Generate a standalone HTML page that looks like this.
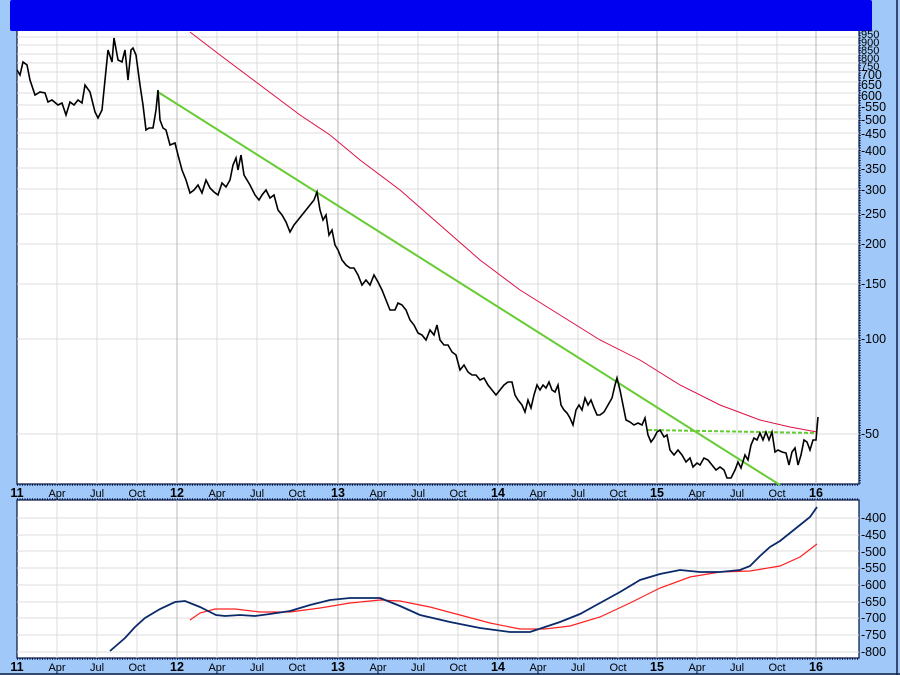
<!DOCTYPE html>
<html><head><style>
html,body{margin:0;padding:0;background:#a0c8f8;}
svg{display:block;font-family:"Liberation Sans",sans-serif;}
</style></head><body>
<svg width="900" height="675" viewBox="0 0 900 675">
<rect width="900" height="675" fill="#a0c8f8"/>
<line x1="897" y1="0" x2="897" y2="675" stroke="#102040" stroke-width="1.5"/>
<line x1="0" y1="674" x2="900" y2="674" stroke="#102040" stroke-width="1.5"/>
<rect x="17" y="0" width="842" height="484" fill="#fff" stroke="#001040" stroke-width="1.2"/>
<rect x="17" y="500" width="842" height="158" fill="#fff" stroke="#001040" stroke-width="1.2"/>
<g stroke="#dcdcdc" stroke-width="1">
<path d="M17 434H859M17 339H859M17 284H859M17 244H859M17 214H859M17 189H859M17 168H859M17 149H859M17 133H859M17 119H859M17 105H859M17 93H859M17 82H859M17 72H859M17 63H859M17 54H859M17 45H859M17 37H859"/>
<path d="M17 518H859M17 535H859M17 551H859M17 568H859M17 585H859M17 602H859M17 618H859M17 635H859M17 652H859"/>
</g>
<g stroke="#dcdcdc">
<path d="M57 0V484M97 0V484M137 0V484M217 0V484M257 0V484M297 0V484M378 0V484M418 0V484M458 0V484M538 0V484M578 0V484M618 0V484M697 0V484M737 0V484M777 0V484"/>
<path d="M57 500V658M97 500V658M137 500V658M217 500V658M257 500V658M297 500V658M378 500V658M418 500V658M458 500V658M538 500V658M578 500V658M618 500V658M697 500V658M737 500V658M777 500V658"/>
</g>
<g stroke="#b8b8b8">
<path d="M177 0V484M338 0V484M498 0V484M657 0V484M816 0V484"/>
<path d="M177 500V658M338 500V658M498 500V658M657 500V658M816 500V658"/>
</g>
<line x1="17" y1="485" x2="859" y2="485" stroke="#001040" stroke-dasharray="1,1.5" stroke-width="1.5"/>
<line x1="17" y1="499" x2="859" y2="499" stroke="#001040" stroke-dasharray="1,1.5" stroke-width="1.5"/>
<line x1="17" y1="659" x2="859" y2="659" stroke="#001040" stroke-dasharray="1,1.5" stroke-width="1.5"/>
<line x1="860" y1="30" x2="860" y2="484" stroke="#001040" stroke-dasharray="1,1.5" stroke-width="1.5"/>
<polyline fill="none" stroke="#dd1144" stroke-width="1" points="190,32 220,55 260,85 300,115 330,135 360,160 400,190 440,225 480,260 520,290 560,315 600,340 640,360 680,385 720,405 760,420 790,427 817,432"/>
<line x1="158" y1="92" x2="780" y2="485" stroke="#66cc33" stroke-width="2"/>
<line x1="648" y1="430" x2="817" y2="433" stroke="#66cc33" stroke-width="2" stroke-dasharray="4,2"/>
<polyline fill="none" stroke="#000" stroke-width="1.6" points="17,70 20,75 23,62 27,65 30,80 35,95 40,92 45,93 48,102 52,100 58,105 62,103 66,115 70,102 74,105 78,100 82,103 85,85 90,92 95,112 98,118 102,110 105,80 108,50 112,62 114,38 118,60 122,62 125,50 128,80 131,50 133,48 136,55 140,85 143,105 146,130 149,128 153,128 156,110 158,90 160,120 163,128 166,130 170,145 175,143 178,155 182,170 186,180 190,193 194,190 198,185 202,193 206,180 210,188 214,192 218,195 222,183 226,187 230,180 233,165 236,158 238,170 241,155 244,175 247,180 250,185 255,195 259,200 262,195 266,190 270,198 274,195 278,210 282,215 286,222 290,232 294,225 298,220 302,215 306,210 310,205 314,200 317,192 320,210 323,220 326,215 329,235 332,230 335,245 338,250 342,260 346,265 350,268 354,268 358,275 362,285 366,280 370,285 374,275 378,282 382,290 386,300 390,310 395,310 398,303 402,305 406,310 410,320 414,325 418,333 422,335 426,340 430,330 434,335 437,325 440,340 444,345 448,345 452,352 456,355 460,370 464,365 468,372 472,375 476,375 480,380 484,378 488,385 492,390 496,395 500,390 504,385 508,382 512,382 515,395 518,400 522,405 525,412 528,400 531,408 534,395 537,385 540,390 543,385 546,388 549,382 552,390 555,392 558,385 561,405 564,410 567,413 570,418 573,425 576,410 579,405 582,410 585,398 588,405 591,400 594,408 597,415 600,415 604,412 608,405 612,398 615,385 617,378 620,390 623,405 626,420 630,422 634,425 638,423 642,425 645,418 648,435 651,442 654,438 657,432 660,430 664,437 667,435 670,450 674,455 678,450 682,455 686,462 690,458 693,467 697,463 700,465 704,458 708,460 712,465 716,470 720,467 724,470 727,478 731,478 735,470 738,462 741,468 745,455 748,460 751,445 754,438 757,440 760,433 763,440 766,432 769,440 772,432 775,452 778,450 782,452 786,453 789,465 792,452 795,448 798,465 801,455 804,440 807,442 810,450 813,440 816,440 818,417"/>
<polyline fill="none" stroke="#ff2020" stroke-width="1.2" points="190,620 200,613 215,609 235,609 260,612 290,612 320,608 350,603 380,600 400,601 430,607 460,615 490,623 520,629 545,629 570,626 600,617 630,603 660,588 690,577 720,572 750,571 780,566 800,557 817,544"/>
<polyline fill="none" stroke="#0a2a6a" stroke-width="1.8" points="110,651 125,638 135,627 145,618 160,609 175,602 185,601 200,607 210,612 216,615 225,616 240,615 255,616 270,614 290,611 310,605 330,600 350,598 380,598 400,606 420,615 450,622 480,628 510,632 530,632 545,627 560,622 580,614 600,603 620,592 640,580 660,574 680,570 700,572 720,572 740,570 750,566 760,556 770,547 780,541 790,533 800,525 810,517 817,507"/>
<rect x="10" y="0" width="862" height="31" rx="2" fill="#0000f0"/>
<g font-size="12.5" fill="#000" lengthAdjust="spacingAndGlyphs">
<text x="861" y="38" font-size="11">950</text><text x="861" y="46" font-size="11">900</text><text x="861" y="54" font-size="11">850</text><text x="861" y="62" font-size="11">800</text><text x="861" y="70" font-size="11">750</text><text x="861" y="79">700</text><text x="861" y="89">650</text><text x="861" y="100">600</text><text x="861" y="111">-550</text><text x="861" y="124">-500</text><text x="861" y="138">-450</text><text x="861" y="155">-400</text><text x="861" y="173">-350</text><text x="861" y="194">-300</text><text x="861" y="218">-250</text><text x="861" y="248">-200</text><text x="861" y="288">-150</text><text x="861" y="343">-100</text><text x="861" y="438">-50</text>
<text x="861" y="522">-400</text><text x="861" y="539">-450</text><text x="861" y="556">-500</text><text x="861" y="572">-550</text><text x="861" y="589">-600</text><text x="861" y="606">-650</text><text x="861" y="622">-700</text><text x="861" y="639">-750</text><text x="861" y="656">-800</text>
</g>
<g font-size="11" fill="#000" text-anchor="middle">
<g transform="translate(0,497)">
<text x="17" font-weight="bold" font-size="12.5">11</text><text x="57">Apr</text><text x="97">Jul</text><text x="137">Oct</text><text x="177" font-weight="bold" font-size="12.5">12</text><text x="217">Apr</text><text x="257">Jul</text><text x="297">Oct</text><text x="338" font-weight="bold" font-size="12.5">13</text><text x="378">Apr</text><text x="418">Jul</text><text x="458">Oct</text><text x="498" font-weight="bold" font-size="12.5">14</text><text x="538">Apr</text><text x="578">Jul</text><text x="618">Oct</text><text x="657" font-weight="bold" font-size="12.5">15</text><text x="697">Apr</text><text x="737">Jul</text><text x="777">Oct</text><text x="816" font-weight="bold" font-size="12.5">16</text>
</g>
<g transform="translate(0,671)">
<text x="17" font-weight="bold" font-size="12.5">11</text><text x="57">Apr</text><text x="97">Jul</text><text x="137">Oct</text><text x="177" font-weight="bold" font-size="12.5">12</text><text x="217">Apr</text><text x="257">Jul</text><text x="297">Oct</text><text x="338" font-weight="bold" font-size="12.5">13</text><text x="378">Apr</text><text x="418">Jul</text><text x="458">Oct</text><text x="498" font-weight="bold" font-size="12.5">14</text><text x="538">Apr</text><text x="578">Jul</text><text x="618">Oct</text><text x="657" font-weight="bold" font-size="12.5">15</text><text x="697">Apr</text><text x="737">Jul</text><text x="777">Oct</text><text x="816" font-weight="bold" font-size="12.5">16</text>
</g>
</g>
</svg>
</body></html>
